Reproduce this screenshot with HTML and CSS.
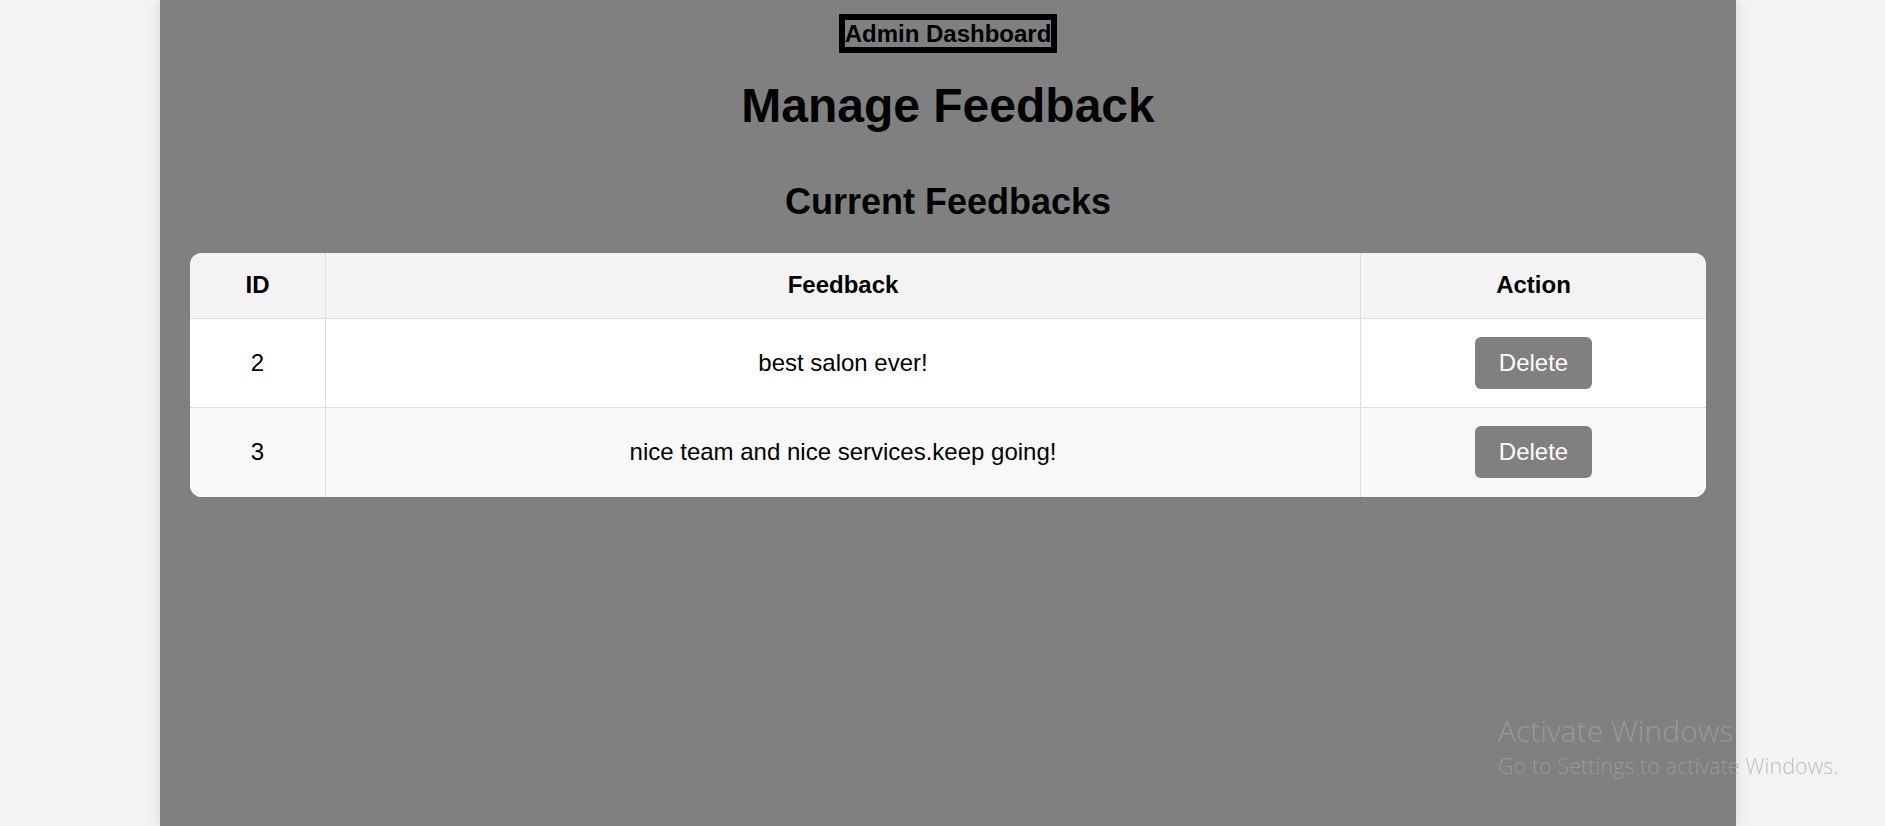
FILE: index.html
```html
<!DOCTYPE html>
<html lang="en">
<head>
<meta charset="utf-8">
<title>Manage Feedback</title>
<link rel="stylesheet" href="styles.css">
</head>
<body>
<div class="page">
  <main class="container">
    <header class="top">
      <a class="admin-link" href="#">Admin Dashboard</a>
    </header>
    <h1 class="title">Manage Feedback</h1>
    <h2 class="subtitle">Current Feedbacks</h2>
    <div class="table-wrap">
      <table class="fb-table">
        <thead>
          <tr>
            <th class="col-id">ID</th>
            <th class="col-fb">Feedback</th>
            <th class="col-act">Action</th>
          </tr>
        </thead>
        <tbody>
          <tr>
            <td>2</td>
            <td>best salon ever!</td>
            <td><button class="btn-delete" type="button">Delete</button></td>
          </tr>
          <tr>
            <td>3</td>
            <td>nice team and nice services.keep going!</td>
            <td><button class="btn-delete" type="button">Delete</button></td>
          </tr>
        </tbody>
      </table>
    </div>
  </main>
</div>
<div class="watermark">
  <div class="wm-title">Activate Windows</div>
  <div class="wm-sub">Go to Settings to activate Windows.</div>
</div>
</body>
</html>
```

FILE: styles.css
```css
html, body {
  margin: 0;
  padding: 0;
  height: 100%;
}

body {
  background: #f3f3f3;
  font-family: "Liberation Sans", Arial, sans-serif;
  color: #000;
  overflow: hidden;
}

.page {
  display: flex;
  height: 100%;
  padding-left: 160px;
}

.container {
  width: 1576px;
  box-sizing: border-box;
  background: #808080;
  padding: 14px 30px 0;
  box-shadow: 0 0 12px rgba(0, 0, 0, 0.12);
  display: flex;
  flex-direction: column;
  align-items: stretch;
}

.top {
  display: flex;
  justify-content: center;
}

.admin-link {
  display: inline-block;
  border: 6px solid #000;
  font-size: 24px;
  line-height: 27px;
  font-weight: bold;
  color: #000;
  text-decoration: none;
}

.title {
  margin: 25px 0 0;
  font-size: 48px;
  line-height: 55px;
  font-weight: bold;
  text-align: center;
}

.subtitle {
  margin: 48px 0 0;
  font-size: 36px;
  line-height: 41px;
  font-weight: bold;
  text-align: center;
}

.table-wrap {
  margin-top: 31px;
  background: #fff;
  border-radius: 12px;
  overflow: hidden;
}

.fb-table {
  width: 100%;
  border-collapse: collapse;
  border-style: hidden;
  font-size: 24px;
  line-height: 28px;
}

.fb-table th,
.fb-table td {
  border: 1px solid #dddddd;
  padding: 18.25px 18px;
  text-align: center;
  vertical-align: middle;
}

.fb-table th {
  background: #f3f3f3;
  font-weight: bold;
}

.fb-table tbody tr:nth-child(even) td {
  background: #f9f9f9;
}

.col-id { width: 99px; }
.col-act { width: 309px; }

.btn-delete {
  display: inline-block;
  background: #808080;
  color: #fff;
  border: none;
  border-radius: 6px;
  padding: 12px 24px;
  font-family: "Liberation Sans", Arial, sans-serif;
  font-size: 24px;
  line-height: 28px;
  cursor: pointer;
}

.watermark {
  position: fixed;
  left: 1498px;
  top: 712px;
  color: rgba(165, 165, 165, 0.68);
  font-family: "Open Sans", "Noto Sans", sans-serif;
  font-weight: 300;
  pointer-events: none;
}

.wm-title {
  font-size: 30px;
  line-height: 38px;
}

.wm-sub {
  font-size: 21.6px;
  line-height: 32px;
}
```
